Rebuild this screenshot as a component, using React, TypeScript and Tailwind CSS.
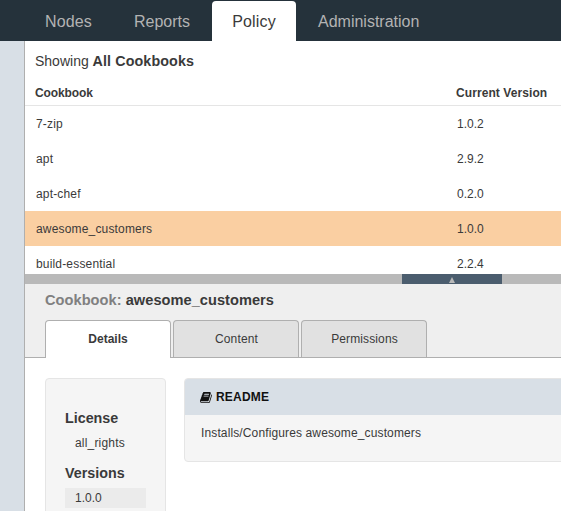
const cookbooks = [
  { name: '7-zip', version: '1.0.2' },
  { name: 'apt', version: '2.9.2' },
  { name: 'apt-chef', version: '0.2.0' },
  { name: 'awesome_customers', version: '1.0.0', selected: true },
  { name: 'build-essential', version: '2.2.4' },
];

function BookIcon() {
  return (
    <svg className="mt-px h-3 w-3 shrink-0" viewBox="0 128 1664 1664" fill="#111">
      <path d="M1639 478q40 57 18 129l-275 906q-19 64-76.5 107.5t-122.5 43.5h-923q-77 0-148.5-53.5t-99.5-131.5q-24-67-2-127 0-4 3-27t4-37q1-8-3-21.5t-3-19.5q2-11 8-21t16.5-23.5 16.5-23.5q23-38 45-91.5t30-91.5q3-10 .5-30t-.5-28q3-11 17-28t17-23q21-36 42-92t25-90q1-9-2.5-32t.5-28q4-13 22-30.5t22-22.5q19-26 42.5-84.5t27.5-96.5q1-8-3-25.5t-2-26.5q2-8 9-18t18-23 17-21q8-12 16.5-30.5t15-35 16-36 19.5-32 26.5-23.5 36-11.5 47.5 5.5l-1 3q38-9 51-9h761q74 0 114 56t18 130l-274 906q-36 119-71.5 153.5t-128.5 34.5h-869q-27 0-38 15-11 16-1 43 24 70 144 70h923q29 0 56-15.5t35-41.5l300-987q7-22 5-57 38 15 59 43zm-1064 2q-4 13 2 22.5t20 9.5h608q13 0 25.5-9.5t16.5-22.5l21-64q4-13-2-22.5t-20-9.5h-608q-13 0-25.5 9.5t-16.5 22.5zm-83 256q-4 13 2 22.5t20 9.5h608q13 0 25.5-9.5t16.5-22.5l21-64q4-13-2-22.5t-20-9.5h-608q-13 0-25.5 9.5t-16.5 22.5z" />
    </svg>
  );
}

function Nav() {
  return (
    <nav className="flex h-[41px] shrink-0 items-end bg-[#25323b] pl-6 text-base text-[#b3b3b3]">
      <a className="flex h-10 w-[90px] items-center pl-[21px] pt-0.5 tracking-[0.1px]">Nodes</a>
      <a className="flex h-10 w-[98px] items-center pl-5 pt-0.5">Reports</a>
      <a className="flex h-10 w-[84px] items-center justify-center rounded-t bg-white pt-0.5 tracking-[0.15px] text-[#3a3a3a]">Policy</a>
      <a className="flex h-10 items-center pl-[22px] pt-0.5">Administration</a>
    </nav>
  );
}

function CookbookList() {
  return (
    <section className="h-[233px] shrink-0 overflow-hidden bg-white">
      <h1 className="h-10 pl-[10px] text-[14px] leading-10">
        Showing <b className="text-[14.3px] tracking-[0.1px]">All Cookbooks</b>
      </h1>
      <div className="flex h-[25px] border-b border-[#e5e5e5] pl-[10px] font-bold leading-[25px]">
        <span className="w-[421px] tracking-[-0.1px]">Cookbook</span>
        <span className="tracking-[0.08px]">Current Version</span>
      </div>
      {cookbooks.map((c) => (
        <div key={c.name} className={`flex h-[35px] pl-[11px] leading-[37px] ${c.selected ? 'bg-[#facfa2]' : ''}`}>
          <span className="w-[421px] tracking-[0.17px]">{c.name}</span>
          <span>{c.version}</span>
        </div>
      ))}
    </section>
  );
}

function Details() {
  return (
    <section className="flex flex-1 flex-col bg-white">
      <header className="flex h-[74px] shrink-0 flex-col justify-between border-b border-[#afafaf] bg-[#efefef] pl-5">
        <h2 className="text-[14.6px] font-bold leading-8 tracking-[0.04px]">
          <span className="text-[#808080]">Cookbook:</span> awesome_customers
        </h2>
        <div className="-mb-px flex h-[38px] gap-0.5 text-center leading-[36px]">
          <span className="h-[38px] w-[126px] rounded-t border border-b-0 border-[#afafaf] bg-white font-bold">Details</span>
          <span className="h-[37px] w-[126px] rounded-t border border-b-0 border-[#afafaf] bg-[#e1e1e1] pl-px tracking-[0.15px]">Content</span>
          <span className="h-[37px] w-[126px] rounded-t border border-b-0 border-[#afafaf] bg-[#e1e1e1] pl-px tracking-[0.12px]">Permissions</span>
        </div>
      </header>
      <div className="flex flex-1 items-start gap-[18px] pl-5 pt-5">
        <aside className="h-[180px] w-[121px] shrink-0 rounded border border-[#e5e5e5] bg-[#f5f5f5] px-[19px] pt-[28px]">
          <h3 className="text-[14.3px] font-bold leading-[22px]">License</h3>
          <p className="pl-[10px] leading-7 tracking-[0.18px]">all_rights</p>
          <h3 className="mt-[5px] text-[14.3px] font-bold leading-[22px]">Versions</h3>
          <p className="mt-1 h-5 bg-[#ebebeb] pl-[10px] leading-5">1.0.0</p>
        </aside>
        <article className="h-[84px] w-[400px] shrink-0 overflow-hidden rounded border border-[#e5e5e5] bg-[#f5f5f5]">
          <h3 className="flex h-9 items-center gap-1 bg-[#d8dfe6] pl-[15px] font-bold tracking-[0.2px] text-[#111]">
            <BookIcon />
            README
          </h3>
          <p className="pl-4 leading-9 tracking-[0.125px]">Installs/Configures awesome_customers</p>
        </article>
      </div>
    </section>
  );
}

export default function App() {
  return (
    <div className="flex h-[511px] w-[561px] flex-col overflow-hidden bg-white font-['Liberation_Sans',Arial,sans-serif] text-[12px] text-[#3a3a3a]">
      <Nav />
      <div className="flex min-h-0 flex-1">
        <div className="w-[25px] shrink-0 border-r border-[#afafaf] bg-[#d8dfe6]" />
        <main className="flex min-w-0 flex-1 flex-col overflow-hidden">
          <CookbookList />
          <div className="flex h-[10px] shrink-0 bg-[#b9b9b9] pl-[377px]">
            <div className="flex h-[10px] w-[100px] items-end justify-center bg-[#4b5d6e] pb-px">
              <svg className="h-[6px] w-[6px]" viewBox="0 0 6 6" fill="#b9b9b9">
                <path d="M3 0L6 6H0Z" />
              </svg>
            </div>
          </div>
          <Details />
        </main>
      </div>
    </div>
  );
}
